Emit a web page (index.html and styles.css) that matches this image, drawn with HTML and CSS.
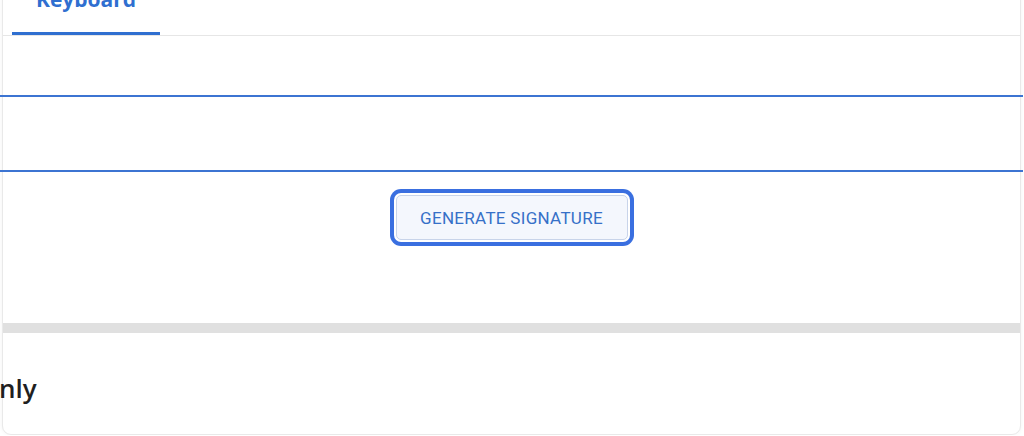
FILE: index.html
```html
<!DOCTYPE html>
<html lang="en">
<head>
<meta charset="utf-8">
<title>Signature</title>
<link rel="stylesheet" href="styles.css">
</head>
<body>
<div class="card">
  <div class="tabs">
    <div class="tab active">Keyboard</div>
  </div>
  <div class="field field-name"></div>
  <div class="field field-initials"></div>
  <div class="actions">
    <button class="btn" type="button">GENERATE SIGNATURE</button>
  </div>
  <div class="divider"></div>
  <h2 class="section-title">nly</h2>
</div>
</body>
</html>
```
FILE: styles.css
```css
html, body {
  margin: 0;
  padding: 0;
  background: #ffffff;
  overflow: hidden;
}

.card {
  box-sizing: border-box;
  width: 1019px;
  margin: -26px 0 0 2px;
  padding: 0 0 30px 0;
  border: 1px solid #e9e9e9;
  border-radius: 9px;
  box-shadow: 0 0 4px rgba(0, 0, 0, 0.05);
  background: #ffffff;
}

.tabs {
  display: flex;
  border-bottom: 1px solid #e6e6e6;
}

.tab {
  box-sizing: border-box;
  height: 60px;
  width: 148px;
  margin-left: 9px;
  padding-top: 12px;
  text-align: center;
  font-family: "Open Sans", "Noto Sans", sans-serif;
  font-weight: 700;
  font-size: 21px;
  line-height: 24px;
  color: #2f6fd0;
  border-bottom: 3px solid #2f6fd0;
}

.field {
  margin: 0 -3px 0 -3px;
  border-bottom: 2px solid #3c74d2;
}

.field-name {
  height: 59px;
}

.field-initials {
  height: 73px;
}

.actions {
  display: flex;
  justify-content: center;
  padding-top: 23px;
  height: 45px;
}

.btn {
  box-sizing: border-box;
  width: 232px;
  height: 45px;
  border: 1px solid #c8d4ea;
  border-radius: 5px;
  background: #f4f7fd;
  box-shadow: 0 0 0 2px #ffffff, 0 0 0 6px #3a6fe0;
  font-family: Roboto, "Liberation Sans", sans-serif;
  font-size: 17px;
  font-weight: 400;
  letter-spacing: 0.3px;
  color: #3670c8;
  padding: 0;
}

.divider {
  margin-top: 83px;
  height: 10px;
  background: #e0e0e0;
}

.section-title {
  margin: 39px 0 0 -4px;
  font-family: "Open Sans", "Noto Sans", sans-serif;
  font-weight: 600;
  font-size: 26px;
  line-height: 32px;
  color: #1f1f1f;
}
```
